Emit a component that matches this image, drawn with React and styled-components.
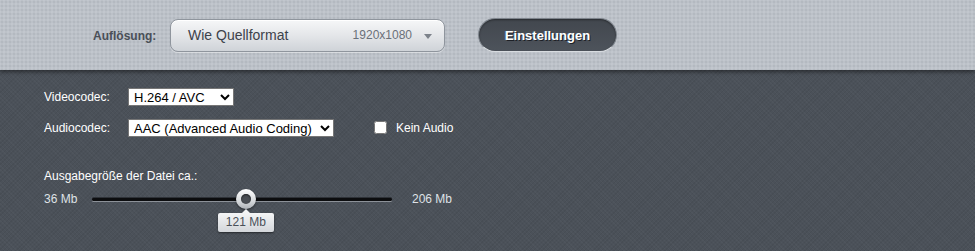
import React from 'react'
import styled, { createGlobalStyle } from 'styled-components'

const GlobalStyle = createGlobalStyle`
  html, body {
    margin: 0;
    padding: 0;
    background: #4b5159;
  }
  body {
    font-family: "Liberation Sans", Arial, sans-serif;
  }
`;

const Page = styled.div`
  width: 975px;
  height: 251px;
  overflow: hidden;
  display: flex;
  flex-direction: column;
`;

const TopBar = styled.header`
  height: 70px;
  flex: none;
  display: flex;
  align-items: center;
  padding-left: 93px;
  box-sizing: border-box;
  background-color: #bcc1c8;
  background-image:
    radial-gradient(rgba(150, 156, 166, 0.35) 0.6px, transparent 0.9px),
    radial-gradient(rgba(220, 224, 230, 0.3) 0.6px, transparent 0.9px);
  background-size: 4px 4px, 4px 4px;
  background-position: 0 0, 2px 2px;
  position: relative;
  z-index: 1;
  box-shadow: 0 2px 4px rgba(0, 0, 0, 0.45);
`;

const TopLabel = styled.span`
  width: 77px;
  font-size: 12px;
  font-weight: bold;
  color: #4a4f57;
  margin-top: 1px;
`;

const FormatSelect = styled.div`
  width: 275px;
  height: 33px;
  box-sizing: border-box;
  border: 1px solid #8f959d;
  border-radius: 8px;
  background: linear-gradient(to bottom, #f6f7f8 0%, #e4e6e9 50%, #cfd3d8 100%);
  box-shadow: inset 0 1px 0 #ffffff, 0 1px 0 rgba(255, 255, 255, 0.4);
  display: flex;
  align-items: center;
  padding: 0 12px 0 17px;

  .name {
    font-size: 14px;
    color: #3d424a;
    flex: 1;
  }

  .size {
    font-size: 12px;
    color: #6a7079;
    margin-right: 12px;
  }
`;

const Caret = styled.span`
  width: 0;
  height: 0;
  border-left: 4.5px solid transparent;
  border-right: 4.5px solid transparent;
  border-top: 5px solid #7c828a;
  margin-top: 2px;
`;

const SettingsButton = styled.button`
  margin-left: 33px;
  width: 139px;
  height: 34px;
  border-radius: 17px;
  border: 1px solid #7d838b;
  border-bottom-color: #d8dce0;
  background: linear-gradient(to bottom, #42474e 0%, #4d535b 100%);
  box-shadow: inset 0 1px 2px rgba(0, 0, 0, 0.4);
  color: #ffffff;
  font-family: "Liberation Sans", Arial, sans-serif;
  font-size: 13px;
  font-weight: bold;
  text-shadow: 1px 1px 0 #1d2026, -1px 0 0 rgba(120, 200, 255, 0.35);
  cursor: pointer;
`;

const Panel = styled.section`
  flex: 1;
  background-color: #4b5159;
  background-image:
    repeating-linear-gradient(45deg, rgba(255, 255, 255, 0.025) 0 1px, transparent 1px 3px),
    repeating-linear-gradient(-45deg, rgba(0, 0, 0, 0.05) 0 1px, transparent 1px 3px);
  padding: 18px 0 0 44px;
  display: flex;
  flex-direction: column;
`;

const Row = styled.div`
  display: flex;
  align-items: center;
  height: 18px;
  margin-bottom: ${p => p.$gap || 0}px;
`;

const FieldLabel = styled.label`
  width: 84px;
  font-size: 12px;
  color: #ffffff;
`;

const CodecSelect = styled.select`
  width: ${p => p.$width}px;
  height: 18px;
  box-sizing: border-box;
  font-family: "Liberation Sans", Arial, sans-serif;
  font-size: 13px;
  color: #000;
  background: #fff;
  border: 1px solid #767676;
  border-radius: 0;
  padding: 0 0 0 1px;
`;

const CheckLabel = styled.label`
  display: flex;
  align-items: center;
  margin-left: 40px;
  font-size: 12px;
  color: #ffffff;

  input {
    width: 13px;
    height: 13px;
    margin: 0 9px 2px 0;
  }
`;

const SizeLabel = styled.div`
  margin-top: 32px;
  font-size: 12px;
  color: #ffffff;
`;

const SliderRow = styled.div`
  margin-top: 5px;
  display: flex;
  align-items: center;
  height: 22px;
`;

const Bound = styled.span`
  font-size: 12px;
  color: #dfe2e6;
  width: ${p => p.$width}px;
`;

const Track = styled.div`
  position: relative;
  width: 300px;
  height: 3px;
  border-radius: 2px;
  background: #0c0d0f;
  box-shadow: 0 1px 0 #8c9198, 0 -1px 0 #2e3238;
  margin-right: 20px;
`;

const Thumb = styled.div`
  position: absolute;
  top: 50%;
  width: 20px;
  height: 20px;
  margin: -10px 0 0 -10px;
  border-radius: 50%;
  background: linear-gradient(to bottom, #ffffff 0%, #d6d9dc 60%, #aeb2b7 100%);
  box-shadow: 0 1px 2px rgba(0, 0, 0, 0.5);
  display: flex;
  align-items: center;
  justify-content: center;

  &::after {
    content: '';
    width: 10px;
    height: 10px;
    border-radius: 50%;
    background: #4a4e54;
    box-shadow: inset 0 1px 2px rgba(0, 0, 0, 0.6);
  }
`;

const Tip = styled.div`
  position: absolute;
  top: 15px;
  width: 56px;
  height: 19px;
  margin-left: -28px;
  border-radius: 2px;
  background: linear-gradient(to bottom, #f4f5f6 0%, #d3d6da 100%);
  box-shadow: 0 1px 2px rgba(0, 0, 0, 0.5);
  font-size: 12px;
  line-height: 19px;
  text-align: center;
  color: #4a5058;

  &::before {
    content: '';
    position: absolute;
    left: 50%;
    top: -4px;
    margin-left: -4px;
    border-left: 4px solid transparent;
    border-right: 4px solid transparent;
    border-bottom: 4px solid #f4f5f6;
  }
`;

const sizes = { min: 36, max: 206, value: 121 }

export default function App() {
  const pct = ((sizes.value - sizes.min) / (sizes.max - sizes.min)) * 100 + 1.3

  return (
    <>
      <GlobalStyle />
      <Page>
        <TopBar>
          <TopLabel>Auflösung:</TopLabel>
          <FormatSelect>
            <span className="name">Wie Quellformat</span>
            <span className="size">1920x1080</span>
            <Caret />
          </FormatSelect>
          <SettingsButton>Einstellungen</SettingsButton>
        </TopBar>

        <Panel>
          <Row $gap={13}>
            <FieldLabel>Videocodec:</FieldLabel>
            <CodecSelect $width={106} defaultValue="h264">
              <option value="h264">H.264 / AVC</option>
            </CodecSelect>
          </Row>
          <Row>
            <FieldLabel>Audiocodec:</FieldLabel>
            <CodecSelect $width={206} defaultValue="aac">
              <option value="aac">AAC (Advanced Audio Coding)</option>
            </CodecSelect>
            <CheckLabel>
              <input type="checkbox" />
              Kein Audio
            </CheckLabel>
          </Row>

          <SizeLabel>Ausgabegröße der Datei ca.:</SizeLabel>
          <SliderRow>
            <Bound $width={48}>{sizes.min} Mb</Bound>
            <Track>
              <Thumb style={{ left: `${pct}%` }} />
              <Tip style={{ left: `${pct}%` }}>{sizes.value} Mb</Tip>
            </Track>
            <Bound>{sizes.max} Mb</Bound>
          </SliderRow>
        </Panel>
      </Page>
    </>
  )
}
